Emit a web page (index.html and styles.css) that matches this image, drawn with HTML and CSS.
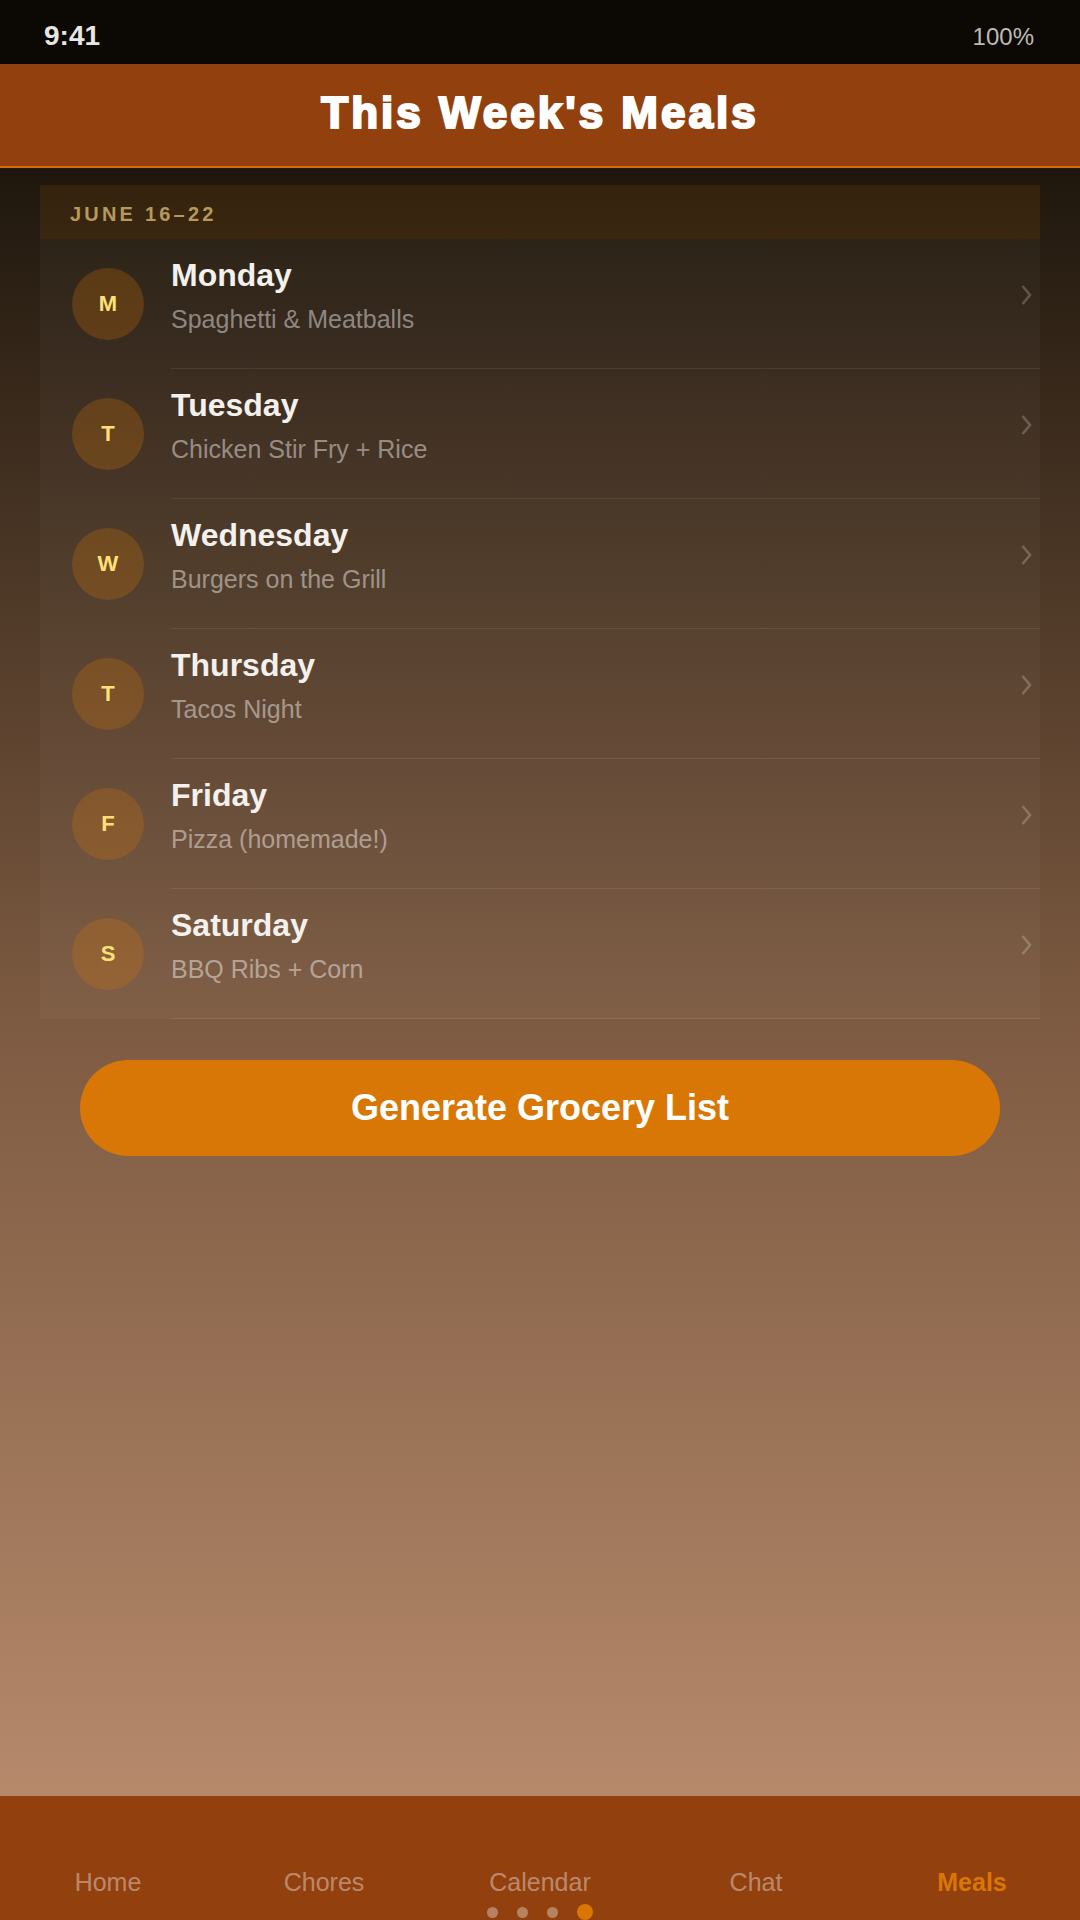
FILE: index.html
```html
<!DOCTYPE html>
<html lang="en">
<head>
<meta charset="utf-8">
<title>This Week's Meals</title>
<link rel="stylesheet" href="styles.css">
</head>
<body>
<div class="screen">
  <div class="status">
    <span class="time">9:41</span>
    <span class="battery">100%</span>
  </div>
  <header class="topbar">
    <h1 class="title">This Week's Meals</h1>
  </header>
  <main class="main">
    <section class="card">
      <div class="week">JUNE 16–22</div>
      <div class="rows">
        <div class="row">
          <div class="avatar">M</div>
          <div class="content">
            <div class="text"><div class="day">Monday</div><div class="meal">Spaghetti &amp; Meatballs</div></div>
            <svg class="chev" width="12" height="22" viewBox="0 0 12 22"><path d="M2.5 2 L10 11 L2.5 20" fill="none" stroke="currentColor" stroke-width="2.6"/></svg>
          </div>
        </div>
        <div class="row">
          <div class="avatar">T</div>
          <div class="content">
            <div class="text"><div class="day">Tuesday</div><div class="meal">Chicken Stir Fry + Rice</div></div>
            <svg class="chev" width="12" height="22" viewBox="0 0 12 22"><path d="M2.5 2 L10 11 L2.5 20" fill="none" stroke="currentColor" stroke-width="2.6"/></svg>
          </div>
        </div>
        <div class="row">
          <div class="avatar">W</div>
          <div class="content">
            <div class="text"><div class="day">Wednesday</div><div class="meal">Burgers on the Grill</div></div>
            <svg class="chev" width="12" height="22" viewBox="0 0 12 22"><path d="M2.5 2 L10 11 L2.5 20" fill="none" stroke="currentColor" stroke-width="2.6"/></svg>
          </div>
        </div>
        <div class="row">
          <div class="avatar">T</div>
          <div class="content">
            <div class="text"><div class="day">Thursday</div><div class="meal">Tacos Night</div></div>
            <svg class="chev" width="12" height="22" viewBox="0 0 12 22"><path d="M2.5 2 L10 11 L2.5 20" fill="none" stroke="currentColor" stroke-width="2.6"/></svg>
          </div>
        </div>
        <div class="row">
          <div class="avatar">F</div>
          <div class="content">
            <div class="text"><div class="day">Friday</div><div class="meal">Pizza (homemade!)</div></div>
            <svg class="chev" width="12" height="22" viewBox="0 0 12 22"><path d="M2.5 2 L10 11 L2.5 20" fill="none" stroke="currentColor" stroke-width="2.6"/></svg>
          </div>
        </div>
        <div class="row">
          <div class="avatar">S</div>
          <div class="content">
            <div class="text"><div class="day">Saturday</div><div class="meal">BBQ Ribs + Corn</div></div>
            <svg class="chev" width="12" height="22" viewBox="0 0 12 22"><path d="M2.5 2 L10 11 L2.5 20" fill="none" stroke="currentColor" stroke-width="2.6"/></svg>
          </div>
        </div>
      </div>
    </section>
    <button class="cta">Generate Grocery List</button>
  </main>
  <nav class="tabs">
    <div class="tab">Home</div>
    <div class="tab">Chores</div>
    <div class="tab">Calendar</div>
    <div class="tab">Chat</div>
    <div class="tab active">Meals</div>
    <div class="dots"><span class="dot"></span><span class="dot"></span><span class="dot"></span><span class="dot on"></span></div>
  </nav>
</div>
</body>
</html>
```

FILE: styles.css
```css
* { box-sizing: border-box; }
html, body { margin: 0; padding: 0; }
body {
  width: 1080px;
  height: 1920px;
  overflow: hidden;
  font-family: "Liberation Sans", Arial, sans-serif;
  background: #0c0904;
}
.screen {
  width: 1080px;
  height: 1920px;
  display: flex;
  flex-direction: column;
}
.status {
  height: 64px;
  flex: none;
  background: #0c0904;
  display: flex;
  justify-content: space-between;
  align-items: baseline;
  padding: 18px 46px 0 44px;
}
.time {
  font-size: 28px;
  font-weight: 700;
  color: #e8e6e3;
  line-height: 36px;
}
.battery {
  font-size: 24px;
  color: #bdbab6;
  line-height: 36px;
}
.topbar {
  flex: none;
  height: 104px;
  background: #92400e;
  border-bottom: 2px solid #d46c08;
  display: flex;
  align-items: center;
  justify-content: center;
}
.title {
  margin: 0;
  font-family: "Liberation Sans", Arial, sans-serif;
  font-weight: 700;
  font-size: 44px;
  letter-spacing: 3px;
  color: #ffffff;
  -webkit-text-stroke: 2.2px #ffffff;
  line-height: 52px;
  padding-bottom: 5px;
}
.main {
  flex: 1;
  background: linear-gradient(to bottom, #1f170d 0%, #7b5940 51%, #b6896b 100%);
  padding: 17px 40px 0;
  display: flex;
  flex-direction: column;
}
.rows {
  background: rgba(255, 255, 255, 0.03);
}
.week {
  height: 54px;
  background: rgba(217, 119, 6, 0.11);
  padding: 17px 30px 0;
  font-size: 20px;
  line-height: 24px;
  font-weight: 700;
  letter-spacing: 3.2px;
  color: #b59a5c;
}
.row {
  display: flex;
  align-items: center;
  padding-left: 32px;
}
.avatar {
  flex: none;
  width: 72px;
  height: 72px;
  border-radius: 50%;
  background: rgba(217, 119, 6, 0.25);
  color: #fde07a;
  font-size: 22px;
  font-weight: 700;
  display: flex;
  align-items: center;
  justify-content: center;
  margin-right: 27px;
}
.content {
  flex: 1;
  display: flex;
  align-items: center;
  padding: 17px 8px 34px 0;
  border-bottom: 1px solid rgba(255, 255, 255, 0.08);
}
.text {
  flex: 1;
}
.day {
  font-size: 32px;
  line-height: 38px;
  font-weight: 700;
  color: #f4f0ec;
}
.meal {
  margin-top: 11px;
  font-size: 25px;
  line-height: 29px;
  color: rgba(255, 255, 255, 0.45);
}
.chev {
  flex: none;
  color: rgba(255, 255, 255, 0.22);
}
.cta {
  margin: 41px 40px 0;
  height: 96px;
  border: none;
  border-radius: 48px;
  background: #d97706;
  color: #ffffff;
  font-family: "Liberation Sans", Arial, sans-serif;
  font-size: 36px;
  font-weight: 700;
}
.tabs {
  position: relative;
  flex: none;
  height: 124px;
  background: #92400e;
  display: grid;
  grid-template-columns: repeat(5, 1fr);
  align-items: start;
  padding-top: 71px;
}
.tab {
  text-align: center;
  font-size: 25px;
  line-height: 30px;
  color: rgba(255, 255, 255, 0.4);
}
.tab.active {
  color: #d97706;
  font-weight: 700;
}
.dots {
  position: absolute;
  left: 0;
  right: 0;
  bottom: 0;
  height: 16px;
  display: flex;
  justify-content: center;
  align-items: center;
  gap: 19px;
}
.dot {
  width: 11px;
  height: 11px;
  border-radius: 50%;
  background: rgba(255, 255, 255, 0.35);
}
.dot.on {
  width: 16px;
  height: 16px;
  background: #d97706;
}
```
